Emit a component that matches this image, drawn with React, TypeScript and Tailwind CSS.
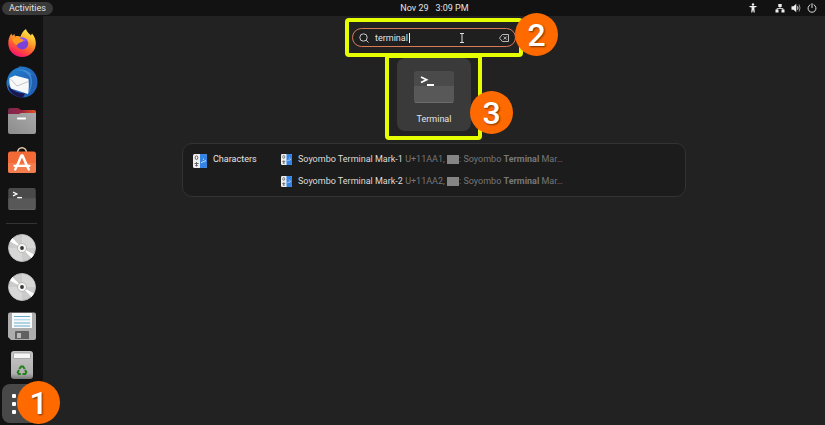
import type { ReactNode } from "react";

function Firefox() {
  return (
    <svg viewBox="0 0 28 28" className="h-7 w-7" aria-hidden="true">
      <defs>
        <linearGradient id="fox" x1="0.8" y1="0" x2="0.3" y2="1">
          <stop offset="0" stopColor="#fff44f" />
          <stop offset="0.35" stopColor="#ffb12c" />
          <stop offset="0.6" stopColor="#ff6a2e" />
          <stop offset="0.85" stopColor="#ff2d52" />
          <stop offset="1" stopColor="#e31587" />
        </linearGradient>
      </defs>
      <path
        d="M18 0c.4 2.400 2 3.500 3.500 5 .8.8 1 1 1.400 1.400L24 4.500c2.500 3 4 6.500 3.800 10A13.800 13.500 0 0 1 14 28 13.700 13.500 0 0 1 .3 14.500C.2 10.500 1.300 7 3.500 4.500l.6 2.300L6.500 5l.4 2.500c2-.8 4-.6 5.500.3C13.500 5 15 1.500 18 0z"
        fill="url(#fox)"
      />
      <circle cx="14.200" cy="14.500" r="6" fill="#7b42d8" />
      <path d="M10 10c3-2.500 7-1.500 9 .8l-3 2.200z" fill="#9059ff" />
      <path d="M4 10c3-2.500 6-2.200 8-.8l3.500 1.800c-.5 2-3 2-4.500 3-1 .8-1.500 1.700-2.600 2C6.500 15 5 13 4 10z" fill="#ff9a1f" />
    </svg>
  );
}

function Thunderbird() {
  return (
    <svg viewBox="0 0 32 32" className="h-8 w-8" aria-hidden="true">
      <defs>
        <linearGradient id="bird" x1="0" y1="0" x2="1" y2="1">
          <stop offset="0" stopColor="#1d86cf" />
          <stop offset="0.5" stopColor="#2468bd" />
          <stop offset="1" stopColor="#1f5db3" />
        </linearGradient>
      </defs>
      <path
        d="M13 1.500C11.500.8 13 .5 15 .5c10 0 16.500 6.500 16.500 15.500S25 31.500 17 31.500C9 31 .5 27 .5 17c0-2 .3-3 1-4C2 8 7 2.500 13 1.500z"
        fill="url(#bird)"
      />
      <path d="M9 4.500c6-1.500 13 2 15 7 1.500 5 0 11-3 17 7-4 9-11 7-17C25 5 16 1.500 9 4.500z" fill="#3b8ed6" />
      <path d="M24 8c3 5 2.500 12-1 19 4-3 7-8 6.500-13-.5-3-2-5-5.500-6z" fill="#215fb0" />
      <path d="M2 19c3 5 9 8 17 8.500L17 31.500C9 31 3 27 2 19z" fill="#1b1650" />
      <path d="M3.500 12 9 9.500 22.500 13c.5 5 .5 10-.5 15L5 22.500C3.500 19 3 15.500 3.500 12z" fill="#f8f8f8" />
      <path d="m4.500 13 6.500 7 11.500-4.500" fill="none" stroke="#b9b9be" strokeWidth=".8" />
    </svg>
  );
}

function Files() {
  return (
    <svg viewBox="0 0 28 26" className="h-[26px] w-7" aria-hidden="true">
      <defs>
        <linearGradient id="tab">
          <stop offset="0" stopColor="#7a2750" />
          <stop offset="0.5" stopColor="#9a2440" />
          <stop offset="1" stopColor="#e95420" />
        </linearGradient>
        <linearGradient id="folder" x1="0" y1="1" x2="1" y2="0">
          <stop offset="0" stopColor="#8b8b8b" />
          <stop offset="1" stopColor="#aaa" />
        </linearGradient>
      </defs>
      <path d="M0 8V2q0-2 2-2h8l3 2h13q2 0 2 2v4z" fill="url(#tab)" />
      <path d="M0 6h11l2-1h15v19q0 2-2 2H2q-2 0-2-2z" fill="url(#folder)" />
      <rect x="9" y="9.500" width="9" height="2" rx=".8" fill="#fff" />
    </svg>
  );
}

function Software() {
  return (
    <svg viewBox="0 0 28 26" className="h-[26px] w-7" aria-hidden="true">
      <path d="M9.500 6C9.500-1 18.500-1 18.500 6" fill="none" stroke="#e6cfae" strokeWidth="1.500" />
      <rect y="4.500" width="28" height="21.500" rx="2.500" fill="#f26a35" />
      <path d="M0 16h28v7.500q0 2.500-2.500 2.500h-23Q0 26 0 23.500z" fill="#f47d4d" />
      <path d="m9 19 4.500-10.500h1L19 19" fill="none" stroke="#fff" strokeWidth="2.600" strokeLinejoin="round" />
      <path d="M6.500 18.800h15M8.500 20l-1.300 2.500M19.500 20l1.300 2.500" stroke="#fff" strokeWidth="2.300" strokeLinecap="round" />
    </svg>
  );
}

function TerminalIcon({ className }: { className: string }) {
  return (
    <svg viewBox="0 0 40 32" className={className} aria-hidden="true">
      <rect width="40" height="32" rx="3" fill="#4a4a4a" />
      <path d="M0 15h40v14q0 3-3 3H3q-3 0-3-3z" fill="#585858" />
      <path d="M1 31.500h38" stroke="#6b6b6b" />
      <path d="m7 6 5.500 2.800L7 11.500" fill="none" stroke="#fff" strokeWidth="1.800" />
      <path d="M13 14h7" stroke="#fff" strokeWidth="2" />
    </svg>
  );
}

function Disc() {
  return (
    <svg viewBox="0 0 28 28" className="h-7 w-7" aria-hidden="true">
      <circle cx="14" cy="14" r="13.500" fill="#cbcbcb" stroke="#b5b5b5" />
      <path d="M14 14 14 1a13 13 0 0 1 13 13zM14 14v13a13 13 0 0 1-13-13z" fill="#d7d7d7" />
      <path d="M14 14 2 7.500 4.500 4zM14 14l12 6.500-2.500 3.500z" fill="#fff" />
      <circle cx="14" cy="14" r="4.500" fill="#f5f5f5" stroke="#aba69d" strokeWidth=".7" />
      <circle cx="14" cy="14" r="1.900" fill="#343434" />
    </svg>
  );
}

function Floppy() {
  return (
    <svg viewBox="0 0 28 28" className="h-7 w-7" aria-hidden="true">
      <path d="M2 .5h24q2 0 2 2V26q0 2-2 2H3l-3-3V2.500q0-2 2-2z" fill="#adadad" />
      <path d="M4 1h20v15H4z" fill="#fafafa" />
      <path d="M6 4.500h16M6 11h16M6 14h16" stroke="#65abc9" />
      <path d="M6 7.700h16" stroke="#b9dcef" strokeWidth="1.500" />
      <path d="M7 20q0-1 1-1h12q1 0 1 1v7H7z" fill="#606060" />
      <path d="M9 21h4v5H9z" fill="#b9b9b9" />
    </svg>
  );
}

function Trash() {
  return (
    <svg viewBox="0 0 22 28" className="h-7 w-[22px]" aria-hidden="true">
      <defs>
        <linearGradient id="bin" x2="0" y2="1">
          <stop offset="0" stopColor="#c6c6c6" />
          <stop offset="0.8" stopColor="#b0b0b0" />
          <stop offset="1" stopColor="#777" />
        </linearGradient>
      </defs>
      <rect width="22" height="28" rx="3" fill="url(#bin)" />
      <rect x="2.500" y="2" width="17" height="5.500" rx="1" fill="#f5f5f5" stroke="#888" strokeWidth=".6" />
      <g fill="none" stroke="#23801f" strokeWidth="2">
        <path d="m8.300 18 1.700-2.500h2l1.700 2.500" />
        <path d="m14 19 1.300 2-1 2h-2.800" />
        <path d="M9.800 23h-2l-1.100-1.800L8 19" />
      </g>
    </svg>
  );
}

function CharactersIcon({ className }: { className: string }) {
  return (
    <svg viewBox="0 0 14 14" className={className} aria-hidden="true">
      <rect width="14" height="14" rx="1.500" fill="#eee" />
      <path d="M7 0h5.500Q14 0 14 1.500v11q0 1.500-1.500 1.500H7z" fill="#3584e4" />
      <ellipse cx="3.500" cy="3.700" rx="1.300" ry="1.900" fill="none" stroke="#555" strokeWidth=".9" />
      <path d="M1.500 9.500h4M3.500 8v4.500M2.300 11.500h2.500" stroke="#555" strokeWidth=".9" />
      <path d="M8 8.500c1.500 1 2-2 2.500-1s1 1 2-1.500M10 5.500l1-.5" fill="none" stroke="#d5e6fa" />
    </svg>
  );
}

function StatusIcons() {
  return (
    <>
      <button type="button" aria-label="Accessibility" className="mr-[18px]">
        <svg viewBox="0 0 8 10" className="h-[10px] w-2" fill="#eee" aria-hidden="true">
          <circle cx="4" cy="1.500" r="1.200" />
          <path d="M.5 3h7v1L5.300 4.500l.5 5H4.700L4 6.800 3.300 9.500H2.200l.5-5L.5 4z" />
        </svg>
      </button>
      <button type="button" aria-label="System menu" className="flex items-center gap-[6px]">
        <svg viewBox="0 0 10 10" className="h-[10px] w-[10px]" fill="#eee" aria-hidden="true">
          <path d="M3.300 1h3.400v3H3.300zM.5 6.500h3v3h-3zM6.500 6.500h3v3h-3z" />
          <path d="M5 4v1.500M2 7V5.500h6V7" fill="none" stroke="#eee" strokeWidth=".8" />
        </svg>
        <svg viewBox="0 0 10 10" className="h-[10px] w-[10px]" aria-hidden="true">
          <path d="M.5 3.300h2L5.300.8v8.400L2.500 6.700h-2z" fill="#eee" />
          <path d="M6.500 3.300q1 1.700 0 3.400" fill="none" stroke="#eee" />
          <path d="M8 1.500q2 3.500 0 7" fill="none" stroke="#999" />
        </svg>
        <svg viewBox="0 0 10 10" className="h-[10px] w-[10px]" fill="none" stroke="#ddd" strokeLinecap="round" aria-hidden="true">
          <path d="M3 1.800a4 4 0 1 0 4 0M5 .6v4" />
        </svg>
      </button>
    </>
  );
}

function DockItem({ label, children }: { label: string; children: ReactNode }) {
  return (
    <button type="button" aria-label={label} className="flex h-[39px] w-full items-center justify-center">
      {children}
    </button>
  );
}

function Step({ n, className }: { n: number; className: string }) {
  return (
    <span
      className={`absolute flex h-[43px] w-[43px] items-center justify-center rounded-full bg-[#ff6a00] text-[32px] leading-8 font-medium text-white [text-shadow:1px_1px_2px_#0008] ${className}`}
    >
      {n}
    </span>
  );
}

function Result({ mark }: { mark: number }) {
  return (
    <li>
      <button type="button" className="flex h-[22px] items-center whitespace-pre text-[#777]">
        <CharactersIcon className="mr-[6px] h-[11px] w-[11px]" />
        <span className="text-[#ddd]">Soyombo Terminal Mark-{mark}</span>
        <span> U+11AA{mark}, </span>
        <span className="h-[9px] w-3 bg-[#858585]" />
        <span>
          : Soyombo <b>Terminal</b> Mar…
        </span>
      </button>
    </li>
  );
}

export default function App() {
  return (
    <div className="flex min-h-screen flex-col bg-[#222] font-['Roboto',sans-serif] text-[9px] leading-3 text-[#e4e4e4]">
      <header className="grid h-4 grid-cols-3 items-center bg-[#121212]">
        <div>
          <button type="button" className="ml-[2px] h-[13px] rounded-full bg-[#393939] px-[7px]">
            Activities
          </button>
        </div>
        <button type="button" className="flex justify-center gap-[7px] pl-11">
          <span>Nov 29</span>
          <span>3:09 PM</span>
        </button>
        <div className="flex items-center justify-end pr-2">
          <StatusIcons />
        </div>
      </header>

      <div className="flex flex-1">
        <nav aria-label="Dock" className="flex w-[43px] shrink-0 flex-col bg-[#121212] pt-[7px]">
          <DockItem label="Firefox"><Firefox /></DockItem>
          <DockItem label="Thunderbird"><Thunderbird /></DockItem>
          <DockItem label="Files"><Files /></DockItem>
          <DockItem label="Software"><Software /></DockItem>
          <DockItem label="Terminal"><TerminalIcon className="h-[22px] w-7" /></DockItem>
          <hr className="mx-[6px] mt-[5px] mb-1 border-[#333]" />
          <DockItem label="Disc 1"><Disc /></DockItem>
          <DockItem label="Disc 2"><Disc /></DockItem>
          <DockItem label="Floppy disk"><Floppy /></DockItem>
          <DockItem label="Trash"><Trash /></DockItem>
          <div className="relative mx-[2px]">
            <button
              type="button"
              aria-label="Show applications"
              className="flex h-[39px] w-full flex-col justify-center gap-1 rounded-lg bg-[#484848] pl-[10px]"
            >
              <span className="h-1 w-1 rounded-[1px] bg-white" />
              <span className="h-1 w-1 rounded-[1px] bg-white" />
              <span className="h-1 w-1 rounded-[1px] bg-white" />
            </button>
            <Step n={1} className="-top-[3px] left-[15px]" />
          </div>
        </nav>

        <main className="flex flex-1 flex-col items-center px-4 pt-3">
          <div className="relative">
            <label className="flex h-[19px] w-[164px] items-center rounded-full border border-[#d97b55] bg-[#1f1f1f] px-[6px]">
              <svg viewBox="0 0 10 10" className="mr-[6px] h-[10px] w-[10px] shrink-0" fill="none" stroke="#ccc" aria-hidden="true">
                <circle cx="4.500" cy="4.500" r="3.700" />
                <path d="m7.200 7.200 2.300 2.300" />
              </svg>
              <input
                type="text"
                aria-label="Search"
                defaultValue="terminal"
                className="w-full min-w-0 bg-transparent outline-none"
              />
              <svg viewBox="0 0 10 8" className="h-2 w-[10px] shrink-0" fill="none" stroke="#ccc" strokeWidth=".9" aria-hidden="true">
                <path d="M3.300.5h6.200v7H3.300L.5 4zM4.700 2.500l3 3m0-3-3 3" />
              </svg>
            </label>
            <span className="absolute top-[5px] left-[57px] h-[10px] w-px bg-white" />
            <svg viewBox="0 0 6 10" className="absolute top-[5px] left-[107px] h-[10px] w-[6px]" fill="none" stroke="#ddd" aria-hidden="true">
              <path d="M1 .5h4M1 9.500h4M3 .5v9" />
            </svg>
            <div className="absolute -top-[10px] -right-[7px] -bottom-[10px] -left-[7px] rounded border-4 border-[#e6ff00]" />
            <Step n={2} className="-top-[15px] left-[163px]" />
          </div>

          <div className="relative mt-[11px]">
            <button type="button" className="flex h-[73px] w-[74px] flex-col items-center rounded-lg bg-[#3a3a3a] pt-[13px]">
              <TerminalIcon className="h-8 w-10" />
              <span className="mt-[10px]">Terminal</span>
            </button>
            <div className="absolute -top-[4px] -right-[11px] -bottom-[9px] -left-[12px] rounded border-4 border-[#e6ff00]" />
            <Step n={3} className="top-[33px] left-[73px]" />
          </div>

          <section className="mt-3 flex w-full max-w-[504px] items-start rounded-[10px] border border-[#333] bg-[#1c1c1c] px-[10px] py-[4px]">
            <button type="button" className="mt-[5px] flex w-[88px] items-start">
              <CharactersIcon className="mt-px mr-[6px] h-[14px] w-[14px]" />
              Characters
            </button>
            <ul>
              <Result mark={1} />
              <Result mark={2} />
            </ul>
          </section>
        </main>
      </div>
    </div>
  );
}
